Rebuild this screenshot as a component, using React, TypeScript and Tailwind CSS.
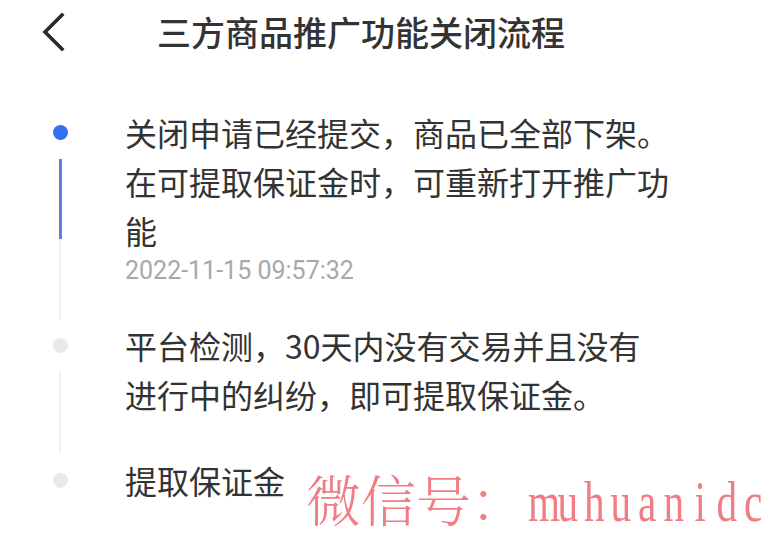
const cjk = { fontFamily: '"Noto Sans CJK SC", "Noto Sans", sans-serif' };

type Step = {
  lines: string[];
  time?: string;
  active?: boolean;
  last?: boolean;
  pb: string;
  mb: string;
};

const steps: Step[] = [
  {
    lines: ['关闭申请已经提交，商品已全部下架。', '在可提取保证金时，可重新打开推广功', '能'],
    time: '2022-11-15 09:57:32',
    active: true,
    pb: 'pb-[35px]',
    mb: 'mb-[2px]',
  },
  {
    lines: ['平台检测，30天内没有交易并且没有', '进行中的纠纷，即可提取保证金。'],
    pb: 'pb-[37px]',
    mb: 'mb-[4px]',
  },
  { lines: ['提取保证金'], last: true, pb: 'pb-0', mb: 'mb-0' },
];

function StepRow({ step }: { step: Step }) {
  return (
    <div className="flex">
      <div className="w-[125px] shrink-0 flex flex-col items-center pr-[5px]">
        <div
          className={`mt-[17px] w-[15px] h-[15px] rounded-full ${
            step.active ? 'bg-[#346ff0]' : 'bg-[#e9e9e9]'
          }`}
        />
        {!step.last && (
          <div className={`flex-1 flex flex-col mt-[19px] ${step.mb}`}>
            {step.active ? (
              <>
                <div className="flex-1 w-[3px] bg-[#5b7fe2]" />
                <div className="flex-1 w-[2px] ml-[0.5px] bg-[#efefef]" />
              </>
            ) : (
              <div className="flex-1 w-[2px] bg-[#efefef]" />
            )}
          </div>
        )}
      </div>
      <div className={`flex flex-col ${step.pb}`}>
        {step.lines.map((l) => (
          <div key={l} className="text-[32px] leading-[49px] text-[#333333] whitespace-nowrap" style={cjk}>
            {l}
          </div>
        ))}
        {step.time && (
          <div
            className="text-[25px] leading-[30px] text-[#a8a8a8] mt-[1px]"
            style={{ fontFamily: 'Roboto, "Noto Sans", sans-serif' }}
          >
            {step.time}
          </div>
        )}
      </div>
    </div>
  );
}

export default function App() {
  return (
    <div className="relative w-[780px] h-[539px] bg-white overflow-hidden">
      <div className="flex items-center h-[64px] pl-[40px]">
        <svg width="28" height="40" viewBox="0 0 28 40" className="shrink-0">
          <path
            d="M22 3 L5 20 L22 37"
            fill="none"
            stroke="#2b2b2b"
            strokeWidth="3.6"
            strokeLinecap="square"
            strokeLinejoin="miter"
          />
        </svg>
        <div className="ml-[89px] text-[34px] leading-[40px] text-[#333333] font-medium" style={cjk}>
          三方商品推广功能关闭流程
        </div>
      </div>

      <div className="mt-[44px]">
        {steps.map((s, i) => (
          <StepRow key={i} step={s} />
        ))}
      </div>

      {/* watermark */}
      <div className="absolute left-[306px] top-[466px] w-[600px] flex items-baseline whitespace-nowrap text-[#f07c84]">
        <span
          className="shrink-0 text-[55px] leading-[64px] font-light"
          style={{ fontFamily: '"Noto Serif CJK SC", "Liberation Serif", "Noto Sans CJK SC", serif' }}
        >
          微信号：
        </span>
        <span
          className="shrink-0 inline-flex ml-[2px] origin-left scale-x-[0.736] text-[56px] leading-[64px]"
          style={{ fontFamily: '"Liberation Serif", serif' }}
        >
          {'muhuanidc'.split('').map((c, i) => (
            <span key={i} className="inline-block w-[36px] text-center">
              {c}
            </span>
          ))}
        </span>
      </div>
    </div>
  );
}
